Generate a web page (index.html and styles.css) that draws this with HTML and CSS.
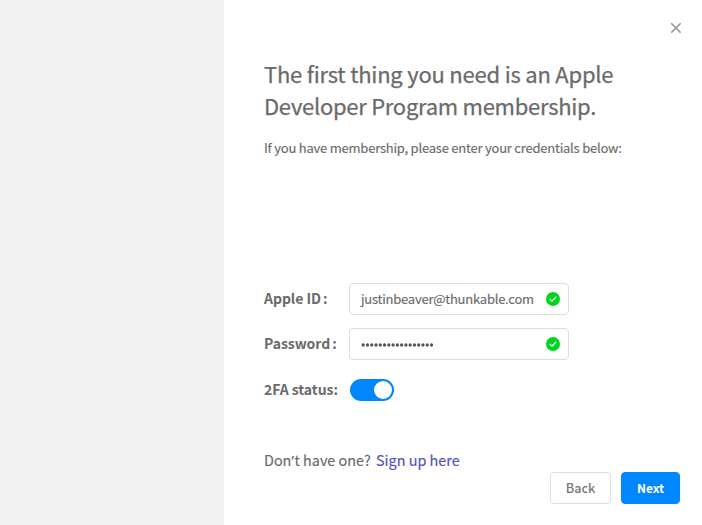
FILE: index.html
```html
<!DOCTYPE html>
<html lang="en">
<head>
<meta charset="utf-8">
<title>Apple Developer Program</title>
<link rel="stylesheet" href="styles.css">
</head>
<body>
<div class="modal">
  <aside class="side"></aside>
  <main class="content">
    <button class="close" aria-label="Close"><svg width="12" height="12" viewBox="0 0 12 12"><path d="M1.2 1.2 10.6 10.6M10.6 1.2 1.2 10.6"/></svg></button>
    <h1 class="title"><span>The first thing you need is an Apple</span><br><span class="second">Developer Program membership.</span></h1>
    <p class="intro"><span>If you have membership, please enter your credentials below:</span></p>
    <div class="form">
      <div class="row">
        <span class="label"><span>Apple ID</span><span class="colon">:</span></span>
        <div class="field"><span class="value">justinbeaver@thunkable.com</span><svg class="check" viewBox="0 0 14 14"><circle cx="7" cy="7" r="7"/><path d="M3.7 7 6 9.2 10.3 4.6"/></svg></div>
      </div>
      <div class="row">
        <span class="label"><span>Password</span><span class="colon">:</span></span>
        <div class="field"><svg class="dots" viewBox="0 0 74 4"><path d="M2.2 2h68.4"/></svg><svg class="check" viewBox="0 0 14 14"><circle cx="7" cy="7" r="7"/><path d="M3.7 7 6 9.2 10.3 4.6"/></svg></div>
      </div>
      <div class="row status">
        <span class="label twofa">2FA status:</span>
        <div class="switch"><div class="knob"></div></div>
      </div>
    </div>
    <p class="signup"><span>Don<span class="apos">’</span>t have one?</span><a class="link">Sign up here</a></p>
    <div class="actions">
      <button class="btn">Back</button>
      <button class="btn primary">Next</button>
    </div>
  </main>
</div>
</body>
</html>
```

FILE: styles.css
```css
* { box-sizing: border-box; margin: 0; padding: 0; }
body { width: 702px; height: 525px; overflow: hidden; background: #fff; color: #6a6a6a; font-family: "Noto Sans CJK SC", sans-serif; white-space: nowrap; }
.modal { display: flex; width: 702px; height: 525px; }
.side { width: 224px; background: #f1f1f1; }
.content { flex: 1; padding: 22px 22px 0 40px; display: flex; flex-direction: column; }
.close { align-self: flex-end; width: 12px; height: 12px; margin-right: -2px; border: 0; background: none; }
.close svg { display: block; fill: none; stroke: #999; stroke-width: 1.6; }
.title { margin-top: 23px; font-size: 22px; line-height: 32px; font-weight: 400; letter-spacing: -0.22px; -webkit-text-stroke: 0.25px #6a6a6a; }
.second { letter-spacing: -0.27px; }
.intro { margin-top: 17px; font-size: 13px; line-height: 20px; letter-spacing: -0.22px; -webkit-text-stroke: 0.15px #6a6a6a; }
.form { margin-top: 125px; }
.row { display: flex; align-items: center; height: 32px; margin-bottom: 13px; }
.label { width: 85px; font-size: 14px; line-height: 20px; font-weight: 700; letter-spacing: -0.05px; margin-top: -2px; }
.colon { margin-left: 2px; }
.field { width: 220px; height: 32px; border: 1px solid #dedede; border-radius: 4px; display: flex; align-items: center; justify-content: space-between; padding: 0 8px 0 11px; }
.value { font-size: 13px; line-height: 20px; letter-spacing: -0.23px; margin-top: -1px; -webkit-text-stroke: 0.15px #6a6a6a; }
.check { width: 14px; height: 14px; margin-top: -1px; fill: #00d41c; }
.check path { fill: none; stroke: #fff; stroke-width: 1.2; }
.dots { width: 74px; height: 4px; margin-top: 2px; fill: none; stroke: #555; stroke-width: 3.3; stroke-linecap: round; stroke-dasharray: 0 4.27; }
.status { margin-top: 14px; }
.switch { width: 44px; height: 22px; margin-left: 1px; border-radius: 11px; background: #0087ff; padding: 2px; display: flex; justify-content: flex-end; }
.knob { width: 18px; height: 18px; border-radius: 50%; background: #fff; }
.signup { margin-top: 31px; font-size: 14.4px; line-height: 20px; -webkit-text-stroke: 0.15px; }
.apos { font-family: "Noto Sans", sans-serif; margin-right: 0.5px; }
.link { color: #5252bd; margin-left: 5.3px; }
.actions { display: flex; justify-content: flex-end; gap: 10px; margin-top: 1px; }
.btn { width: 61px; height: 32px; border: 1px solid #dedede; border-radius: 4px; background: #fff; color: #777; font: 500 12.6px/20px "Noto Sans CJK SC", sans-serif; }
.primary { width: 59px; border-color: #0087ff; background: #0087ff; color: #fff; font-weight: 700; font-size: 12px; }
```
